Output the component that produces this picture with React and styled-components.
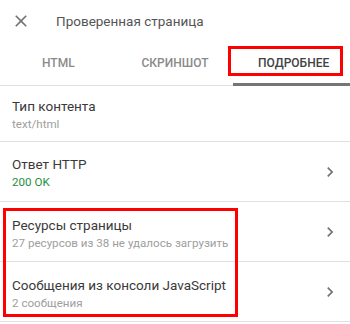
import React from "react";
import styled, { createGlobalStyle } from "styled-components";

const Global = createGlobalStyle`
  html, body { margin: 0; padding: 0; background: #fff; }
  body { font-family: Roboto, "Noto Sans", Arial, sans-serif; }
`;

const Page = styled.div`
  position: relative;
  width: 350px;
  height: 324px;
  background: #fff;
  overflow: hidden;
`;

const Header = styled.div`
  display: flex;
  align-items: center;
  height: 42px;
  padding-left: 11px;
  gap: 25px;
`;

const CloseBtn = styled.svg`
  width: 20px;
  height: 20px;
  fill: #757575;
  flex: none;
`;

const Title = styled.div`
  font-size: 13.5px;
  color: #555;
  margin-top: -1px;
`;

const Tabs = styled.div`
  display: grid;
  grid-template-columns: 1fr 1fr 1fr;
  height: 43px;
  border-bottom: 1px solid #e0e0e0;
`;

const Tab = styled.div`
  display: flex;
  align-items: center;
  justify-content: center;
  font-size: 12px;
  font-weight: 500;
  text-transform: uppercase;
  color: ${(p) => (p.$active ? "#424242" : "#8a8a8a")};
  border-bottom: 3px solid ${(p) => (p.$active ? "#757575" : "transparent")};
  margin-bottom: -1px;
  padding-top: 1px;
  padding-left: ${(p) => p.$shift || 0}px;
`;

const Row = styled.div`
  display: flex;
  align-items: center;
  height: ${(p) => p.$h}px;
  box-sizing: border-box;
  padding: 0 10px 0 12px;
  border-bottom: 1px solid #e0e0e0;
`;

const RowText = styled.div`
  flex: 1;
  display: flex;
  flex-direction: column;
  padding-top: ${(p) => p.$pt || 0}px;
`;

const RowTitle = styled.div`
  font-size: 13.5px;
  line-height: 20px;
  color: #3a3a3a;
`;

const RowSub = styled.div`
  font-size: 11.6px;
  line-height: 16px;
  color: ${(p) => (p.$ok ? "#1e8e3e" : "#9e9e9e")};
`;

const Chevron = styled.svg`
  width: 20px;
  height: 20px;
  fill: #757575;
  flex: none;
`;

const Highlight = styled.div`
  position: absolute;
  box-sizing: border-box;
  border: 3px solid #ff0000;
  pointer-events: none;
`;

const ChevronIcon = () => (
  <Chevron viewBox="0 0 24 24">
    <path d="M10 6L8.59 7.41 13.17 12l-4.58 4.59L10 18l6-6z" />
  </Chevron>
);

const rows = [
  { title: "Тип контента", sub: "text/html", h: 56, chevron: false },
  { title: "Ответ HTTP", sub: "200 OK", ok: true, h: 60, chevron: true },
  { title: "Ресурсы страницы", sub: "27 ресурсов из 38 не удалось загрузить", h: 60, chevron: true, pt: 2 },
  { title: "Сообщения из консоли JavaScript", sub: "2 сообщения", h: 60, chevron: true, pt: 2 },
];

export default function App() {
  return (
    <Page>
      <Global />
      <Header>
        <CloseBtn viewBox="0 0 24 24">
          <path d="M19 6.41L17.59 5 12 10.59 6.41 5 5 6.41 10.59 12 5 17.59 6.41 19 12 13.41 17.59 19 19 17.59 13.41 12z" />
        </CloseBtn>
        <Title>Проверенная страница</Title>
      </Header>
      <Tabs>
        <Tab $shift={-6}>HTML</Tab>
        <Tab>Скриншот</Tab>
        <Tab $active $shift={4}>Подробнее</Tab>
      </Tabs>
      {rows.map((r) => (
        <Row key={r.title} $h={r.h}>
          <RowText $pt={r.pt}>
            <RowTitle>{r.title}</RowTitle>
            <RowSub $ok={r.ok}>{r.sub}</RowSub>
          </RowText>
          {r.chevron && <ChevronIcon />}
        </Row>
      ))}
      <Highlight style={{ left: 228, top: 46, width: 115, height: 30 }} />
      <Highlight style={{ left: 3, top: 208, width: 235, height: 109 }} />
    </Page>
  );
}
